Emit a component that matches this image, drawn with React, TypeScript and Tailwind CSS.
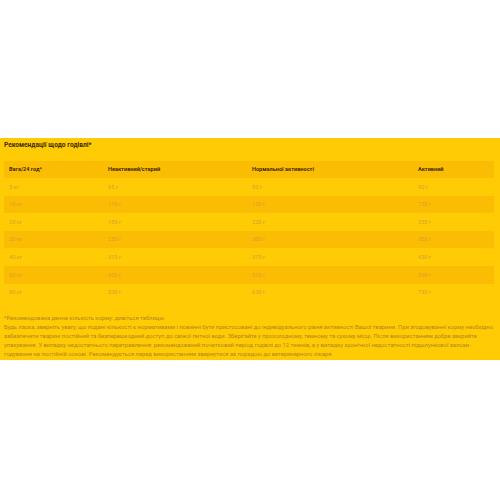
const rows = [
  ['5 кг', '65 г', '80 г', '90 г'],
  ['10 кг', '110 г', '130 г', '155 г'],
  ['20 кг', '185 г', '220 г', '255 г'],
  ['30 кг', '250 г', '300 г', '350 г'],
  ['40 кг', '315 г', '375 г', '430 г'],
  ['60 кг', '430 г', '510 г', '590 г'],
  ['80 кг', '530 г', '630 г', '730 г'],
]

const notes = [
  '*Рекомендована денна кількість корму: дивіться таблицю',
  'Будь ласка, зверніть увагу, що подані кількості є нормативами і повинні бути пристосовані до індивідуального рівня активності Вашої тварини. При згодовуванні корму необхідно',
  'забезпечити тварині постійний та безперешкодний доступ до свіжої питної води. Зберігайте у прохолодному, темному та сухому місці. Після використанням добре закрийте',
  'упакування. У випадку недостатнього перетравлення: рекомендований початковий період годівлі до 12 тижнів, а у випадку хронічної недостатності підшлункової залози-',
  'годування на постійній основі. Рекомендується перед використанням звернутися за порадою до ветеринарного лікаря.',
]

export default function App() {
  return (
    <div className="h-[500px] w-[500px] bg-white font-['Roboto','Liberation_Sans',sans-serif]">
      <div className="h-[138px]" />
      <section className="bg-[#ffcb05] px-[4px] pt-[2px] pb-[1px]">
        <h2 className="text-[6.6px] font-bold leading-[10px] text-[#3d2c00]">Рекомендації щодо годівлі*</h2>
        <table className="mt-[11px] w-[490px] table-fixed border-collapse">
          <colgroup>
            <col className="w-[99px]" />
            <col className="w-[144px]" />
            <col className="w-[166px]" />
            <col className="w-[81px]" />
          </colgroup>
          <thead>
            <tr className="h-[17px] bg-[#fbbd03] text-left text-[5.6px] font-bold text-[#3d2c00]">
              <th className="pl-[5px] font-bold">Вага/24 год*</th>
              <th className="pl-[5px] font-bold">Неактивний/старий</th>
              <th className="pl-[5px] font-bold">Нормальної активності</th>
              <th className="pl-[5px] font-bold">Активний</th>
            </tr>
          </thead>
          <tbody>
            {rows.map((r, i) => (
              <tr key={r[0]} className={`h-[17.6px] text-[5.6px] text-[#d99f2e] ${i % 2 === 1 ? 'bg-[#fbbd03]' : ''}`}>
                {r.map((c, j) => (
                  <td key={j} className="pl-[5px]">{c}</td>
                ))}
              </tr>
            ))}
          </tbody>
        </table>
        <div className="mt-[13px] text-[5.8px] leading-[8.9px] text-[#b3861c]">
          {notes.map((n) => (
            <p key={n} className="whitespace-nowrap">{n}</p>
          ))}
        </div>
      </section>
    </div>
  )
}
